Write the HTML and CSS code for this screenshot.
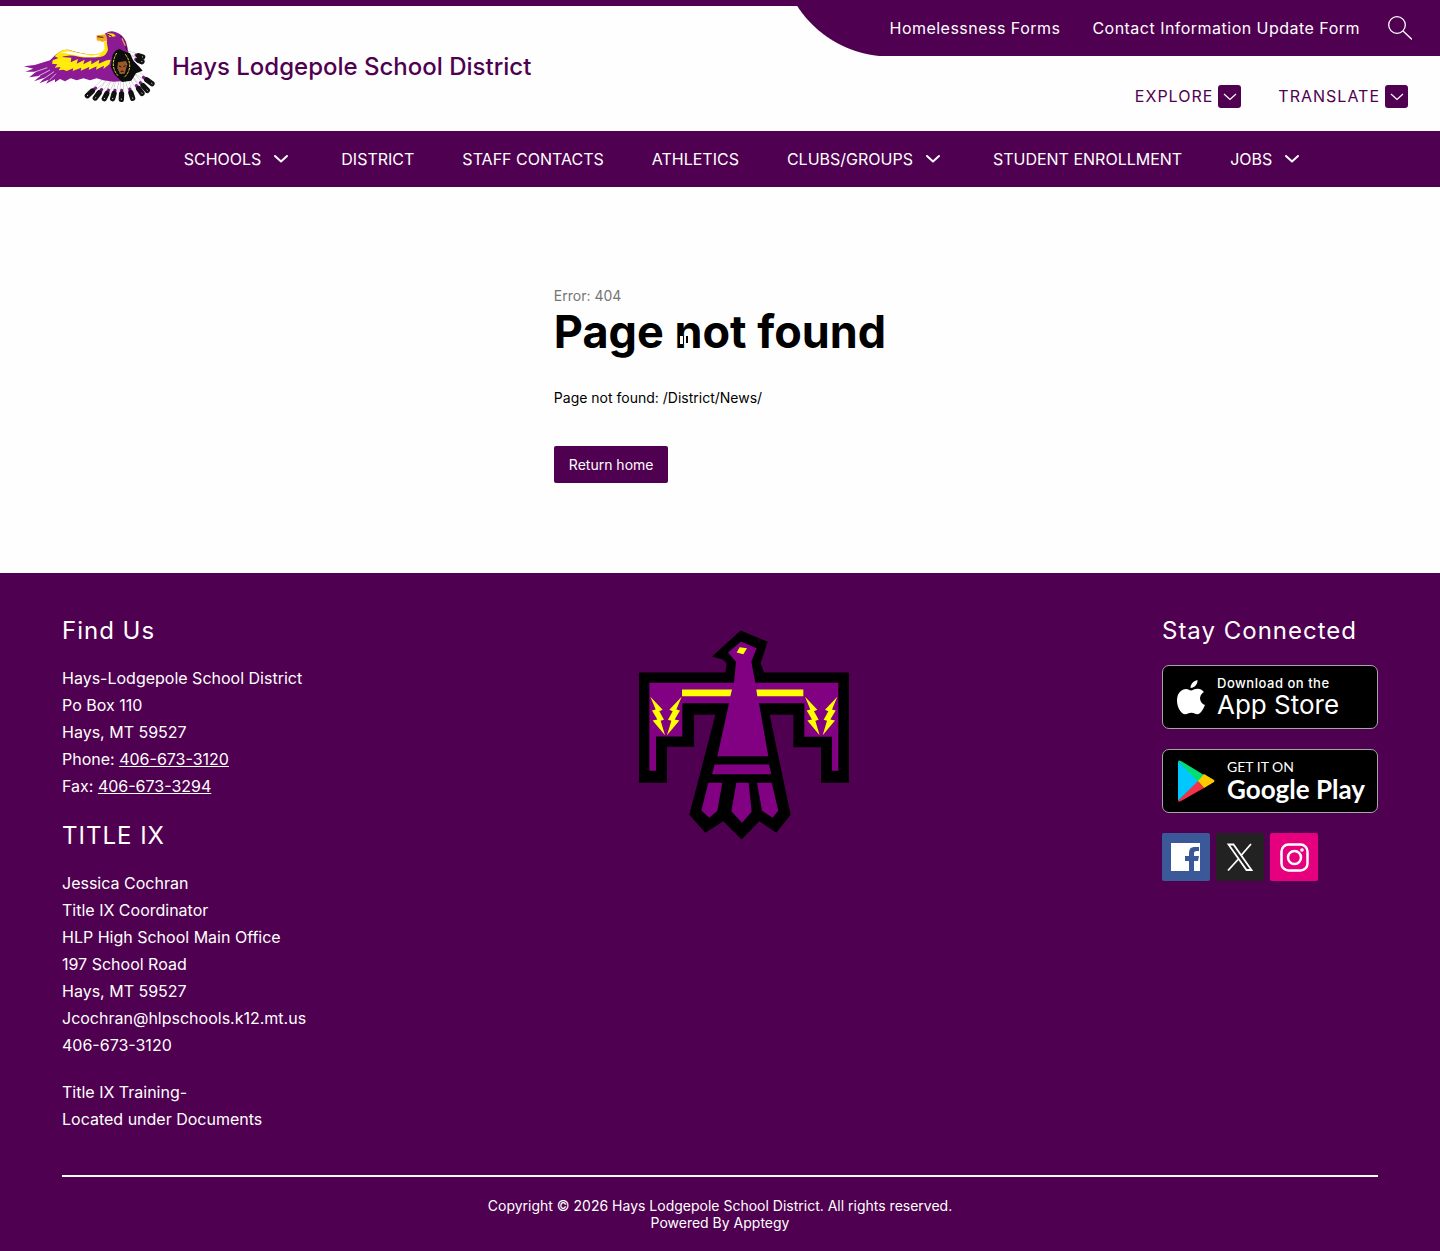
FILE: index.html
```html
<!DOCTYPE html>
<html lang="en">
<head>
<meta charset="utf-8">
<meta name="viewport" content="width=device-width, initial-scale=1">
<title>Hays Lodgepole School District</title>
<link rel="stylesheet" href="styles.css">
</head>
<body>
<header class="header">
  <a class="brand" href="#">
    <svg class="brand-logo" viewBox="72 87 396 219" aria-hidden="true">
      <defs>
        <g id="tail">
          <path pathLength="100" d="M262 284L312 238"/><path pathLength="100" d="M286 291L324 240"/><path pathLength="100" d="M313 293L338 242"/><path pathLength="100" d="M338 293L352 242"/><path pathLength="100" d="M364 295L366 240"/><path pathLength="100" d="M398 292L380 236"/><path pathLength="100" d="M426 277L392 230"/><path pathLength="100" d="M442 268L400 222"/><path pathLength="100" d="M456 248L404 210"/><path pathLength="100" d="M426 182L388 168"/><path pathLength="100" d="M428 168L388 156"/>
        </g>
      </defs>
      <g fill="none" stroke-linecap="round">
        <use href="#tail" stroke="#aaa" stroke-width="11"/>
        <use href="#tail" stroke="#fff" stroke-width="9"/>
        <use href="#tail" stroke="#7d1889" stroke-width="9" stroke-dasharray="50 100"/>
        <use href="#tail" stroke="#111" stroke-width="16" stroke-dasharray="30 100"/>
        <use href="#tail" stroke="#ddd" stroke-width="3" stroke-dasharray="2 100"/>
      </g>
      <path fill="#8b1a94" d="M314 98Q330 88 344 92 368 98 378 122 384 142 386 160L392 190 372 240 340 242 310 238 290 232 270 238 250 232 230 238 212 232 195 241 180 234 165 244 165 235 138 248 146 236 118 247 134 230 102 241 122 224 88 229 108 212 76 212 100 203 72 196 104 192 150 178 166 162Q185 145 204 146 250 160 290 162 312 158 320 148L320 116z"/>
      <path fill="none" stroke="#fff" stroke-width="2" d="M104 213l38-13M116 225l34-18M130 234l32-22M148 238l20-20"/>
      <path fill="#ffe70a" d="M164 166Q182 144 204 146 240 158 280 160 306 158 314 144L312 124 320 120 324 146Q320 164 300 168 260 172 236 167 200 158 176 172z"/>
      <path fill="#fff" d="M182 154L206 151 274 164 304 160 288 168 254 168 204 158z"/>
      <path fill="#ffec0b" d="M158 178L184 168 214 170 212 184 234 174 230 188 254 176 250 190 274 178 274 190 298 176 296 188 320 178 332 176 328 190 310 204 312 194 288 206 290 196 266 207 268 198 242 209 244 200 218 210 220 202 200 210 190 206 176 208 182 198 164 200 172 190 156 188z"/>
      <path fill="#f7a71c" d="M290 103l28-3 4 18-14 5-14-5 2 6q-9-8-6-21z"/>
      <path fill="#ffe70a" d="M322 96l18 2 8 8-20 2z"/>
      <path fill="none" stroke="#32101d" stroke-width="3" d="M292 107l18 2M324 100l12 6M360 104q16 14 20 44"/>
      <path fill="none" stroke="#f09a66" stroke-width="4" d="M366 112l10 22"/>
      <path fill="#0c0c0c" d="M346 150l12-7 14 8 18 6 10 22 18 18 10 12-20 8-14 22-28 4-24-24-10-22 6-36z"/>
      <path fill="none" stroke="#f4df48" stroke-width="3" stroke-dasharray="8 3" d="M350 156q-22 38 4 68M376 160q28 38-4 70"/>
      <path fill="#9b5a2d" d="M354 184l24-4 4 10-8 28-14 1-8-17z"/>
      <path fill="none" stroke="#251005" stroke-width="3" d="M357 195l7 3M370 197l7-3M362 211h9"/>
    </svg>
    <span class="brand-name">Hays Lodgepole School District</span>
  </a>
  <div class="header-tools">
    <div class="quick">
      <a href="#">Homelessness Forms</a>
      <a href="#">Contact Information Update Form</a>
      <button class="search" type="button" aria-label="Search">
        <svg viewBox="0 0 24 24" width="24" height="24" fill="none" stroke="currentColor" stroke-width="1.3"><circle cx="9" cy="9" r="8.3"/><path d="M15 15l9 8.5"/></svg>
      </button>
    </div>
    <div class="menus">
      <button class="menu" type="button">EXPLORE
        <svg viewBox="0 0 23 23" width="23" height="23"><rect width="23" height="23" rx="3" fill="#500050"/><path d="M6 9l6 5.500 6-5.500" fill="none" stroke="#fff" stroke-width="1.200"/></svg>
      </button>
      <button class="menu" type="button">TRANSLATE
        <svg viewBox="0 0 23 23" width="23" height="23"><rect width="23" height="23" rx="3" fill="#500050"/><path d="M6 9l6 5.500 6-5.500" fill="none" stroke="#fff" stroke-width="1.200"/></svg>
      </button>
    </div>
  </div>
</header>

<nav class="nav" aria-label="Main">
  <button type="button">SCHOOLS <svg viewBox="0 0 16 10" width="16" height="10"><path d="M2 2l6 5.500L14 2"/></svg></button>
  <a href="#">DISTRICT</a>
  <a href="#">STAFF CONTACTS</a>
  <a href="#">ATHLETICS</a>
  <button type="button">CLUBS/GROUPS <svg viewBox="0 0 16 10" width="16" height="10"><path d="M2 2l6 5.500L14 2"/></svg></button>
  <a href="#">STUDENT ENROLLMENT</a>
  <button type="button">JOBS <svg viewBox="0 0 16 10" width="16" height="10"><path d="M2 2l6 5.500L14 2"/></svg></button>
</nav>

<main class="main">
  <div class="error">
    <p class="error-code">Error: 404</p>
    <h1>Page not found<svg class="caret" viewBox="0 0 10 10" width="10" height="10" aria-hidden="true"><path fill="#fff" d="M1 1h6v8H1z"/><path d="M4 1h1v8H4zM7 1h2v7H7z"/></svg></h1>
    <p class="error-path">Page not found: /District/News/</p>
    <a class="home" href="#">Return home</a>
  </div>
</main>

<footer class="footer">
  <div class="footer-columns">
    <div class="contact">
      <h2>Find Us</h2>
      <p>Hays-Lodgepole School District<br>Po Box 110<br>Hays, MT 59527<br>Phone: <a href="tel:406-673-3120">406-673-3120</a><br>Fax: <a href="tel:406-673-3294">406-673-3294</a></p>
      <h2>TITLE IX</h2>
      <p>Jessica Cochran<br>Title IX Coordinator<br>HLP High School Main Office<br>197 School Road<br>Hays, MT 59527<br>Jcochran@hlpschools.k12.mt.us<br>406-673-3120</p>
      <p>Title IX Training-<br>Located under Documents</p>
    </div>
    <svg class="thunderbird" viewBox="27 30 630 627" role="img" aria-label="Thunderbird">
      <path d="M27 156H286L290 130 278 117 246 108 332 30 413 64 392 128 402 156H657V487H573V380H490V283H419L482 583 439 637 388 602 335 657 280 602 226 637 178 583 256 283H192V379H111V487H27z"/>
      <path fill="#820082" d="M58 187H312L318 124 294 96 333 63 380 83 364 124 376 187H625V451H606V349H523V248H387L415 407H262L297 248H157V348H78V451H58zM254 432H417L424 461H246zM235 487H277L262 571 238 592 214 570zM319 487H356L365 574 336 607 304 572zM381 487H425L445 570 428 592 396 571z"/>
      <path fill="#ff0" d="M156 207H306L301 227H156zM379 207H520V227H382zM329 80L351 83 340 101 320 96z"/>
      <g fill="#ff0">
        <path id="bolt" d="M61 229L98 268 88 272 102 298 92 301 105 344 68 300 82 297 66 270 77 267z"/>
        <use href="#bolt" transform="matrix(-1 0 0 1 216 0)"/>
        <use href="#bolt" transform="translate(464 0)"/>
        <use href="#bolt" transform="matrix(-1 0 0 1 683 0)"/>
      </g>
    </svg>
    <div class="connect">
      <h2>Stay Connected</h2>
      <a class="store" href="#">
        <svg class="apple" viewBox="0 0 28 35" width="28" height="35" fill="#fff" aria-hidden="true"><path d="M20.500 0c.3 4-2.900 8-6.900 8C13.200 4 16.900.7 20.500 0zM14 10.500c1.600 0 3.500-1.700 6.800-1.700 2.700.1 4.800 1.400 6.100 3.300-5.800 3.700-4.700 10.800 1 12.900-1.300 3.600-4.300 9.200-7.400 9.200-2.300 0-3.300-1.400-6.100-1.400-2.900 0-4 1.400-6.100 1.400C3.800 34.200 0 26.800 0 20.700 0 13 4.700 9 9 9c2.300 0 3.700 1.500 5 1.500z"/></svg>
        <span class="store-text"><small>Download on the</small><strong>App Store</strong></span>
      </a>
      <a class="store google" href="#">
        <svg viewBox="0 0 38 42" width="38" height="42" aria-hidden="true"><path fill="#00c8ff" d="M1 1v40l21-20z"/><path fill="#00df76" d="M1 1q1-1 3 0l23 14-6 7z"/><path fill="#f43249" d="M1 41l20-20 6 7-23 13q-2 1-3 0z"/><path fill="#ffc900" d="M27 14l10 6q1 1 0 2l-10 6-6-7z"/></svg>
        <span class="store-text"><small>GET IT ON</small><strong>Google Play</strong></span>
      </a>
      <div class="social">
        <a href="#" aria-label="Facebook"><svg viewBox="0 0 48 48" width="48" height="48"><rect width="48" height="48" rx="2" fill="#3b5998"/><path fill="#fff" d="M9 10h29v28h-6V28h4l1-5h-5v-3q0-2 3-2h2v-4h-5q-5 0-5 6v3h-4v5h4v10H9z"/></svg></a>
        <a href="#" aria-label="X"><svg viewBox="0 0 48 48" width="48" height="48"><rect width="48" height="48" rx="2" fill="#222"/><path fill="none" stroke="#fff" stroke-width="1.800" d="M12.500 11.500h5L35.500 37h-5zM35 11L25.500 22M22 26.500L12 37.500"/></svg></a>
        <a href="#" aria-label="Instagram"><svg viewBox="0 0 48 48" width="48" height="48"><rect width="48" height="48" rx="2" fill="#e6007e"/><g fill="none" stroke="#fff" stroke-width="2.500"><rect x="11.500" y="11.500" width="26" height="26" rx="7"/><circle cx="24.500" cy="24.500" r="6.500"/></g><circle cx="32" cy="17" r="1.800" fill="#fff"/></svg></a>
      </div>
    </div>
  </div>
  <div class="legal">Copyright © 2026 Hays Lodgepole School District. All rights reserved.<br>Powered By <a href="#">Apptegy</a></div>
</footer>
</body>
</html>
```
FILE: styles.css
```css
* { box-sizing: border-box; }
body {
  margin: 0;
  background: #fefefe;
  color: #000;
  font: 16px/24px Inter, "Liberation Sans", sans-serif;
}
a { color: inherit; text-decoration: none; }
button { padding: 0; border: 0; background: none; color: inherit; font: inherit; letter-spacing: inherit; cursor: pointer; }
svg { display: block; flex: none; }
h1, h2, p { margin: 0; }

.header {
  display: flex;
  justify-content: space-between;
  min-height: 131px;
  border-top: 6px solid #500050;
  background: #fefefe;
  color: #500050;
}
.brand { display: flex; align-items: center; gap: 16px; padding: 0 0 5px 24px; }
.brand-logo { width: 132px; height: 73px; }
.brand-name { padding-top: 2px; font-size: 24px; line-height: 32px; font-weight: 500; }
.header-tools { display: flex; flex-direction: column; align-items: flex-end; }
.quick {
  display: flex;
  align-items: center;
  gap: 32px;
  height: 56px;
  margin-top: -6px;
  padding: 0 28px 0 96px;
  background:
    radial-gradient(circle at 96px -54px, #500050 110px, transparent 111px) 0 0 / 96px 56px no-repeat,
    linear-gradient(#500050, #500050) 96px 0 no-repeat;
  color: #fff;
  letter-spacing: 0.03em;
}
.search { margin-left: -4px; }
.menus { display: flex; gap: 37px; padding: 28px 32px 0 0; }
.menu { display: flex; align-items: center; gap: 5px; letter-spacing: 1px; }

.nav {
  display: flex;
  flex-wrap: wrap;
  justify-content: center;
  align-items: center;
  gap: 0 48px;
  min-height: 56px;
  padding-left: 48px;
  background: #500050;
  color: #fff;
}
.nav button { display: flex; align-items: center; gap: 12px; padding-right: 4px; }
.nav path { fill: none; stroke: #fff; stroke-width: 2; stroke-linecap: round; stroke-linejoin: round; }

.main { display: flex; justify-content: center; padding: 100px 24px 90px; }
.error { font-size: 14px; line-height: 18px; }
.error-code { color: #757575; }
h1 { position: relative; font-size: 45px; line-height: 54px; font-weight: 700; }
.caret { position: absolute; left: 125px; top: 30px; }
.error-path { margin: 30px 0 39px; }
.home { display: inline-block; padding: 10px 15px 9px; border-radius: 2px; background: #500050; color: #fff; }

.footer { padding: 42px 62px 20px; background: #500050; color: #fff; }
.footer-columns { display: flex; justify-content: space-between; align-items: flex-start; padding-bottom: 42px; border-bottom: 2px solid #fff; }
.contact { width: 264px; line-height: 27px; }
h2 { font-size: 24px; line-height: 32px; font-weight: 400; letter-spacing: 1px; }
.contact p { margin: 18px 0 20px; }
.contact p:last-child { margin-bottom: 0; }
.contact a { text-decoration: underline; }
.thunderbird { width: 210px; height: 210px; margin-top: 15px; }
.connect { width: 216px; }
.store {
  display: flex;
  align-items: center;
  gap: 12px;
  height: 64px;
  margin-top: 18px;
  padding-left: 14px;
  border: 1px solid #a6a6a6;
  border-radius: 7px;
  background: #000;
}
.store + .store { margin-top: 20px; }
.store-text { display: flex; flex-direction: column; }
.store small { font-size: 13px; line-height: 16px; font-weight: 500; letter-spacing: 0.04em; }
.store strong { font-size: 26px; line-height: 28px; font-weight: 400; }
.google .store-text { font-family: Lato, sans-serif; }
.google small { font-size: 14px; font-weight: 400; letter-spacing: 0; }
.google strong { font-weight: 700; }
.social { display: flex; gap: 6px; margin-top: 20px; }
.legal { padding-top: 20px; font-size: 14px; line-height: 17px; text-align: center; }
```
